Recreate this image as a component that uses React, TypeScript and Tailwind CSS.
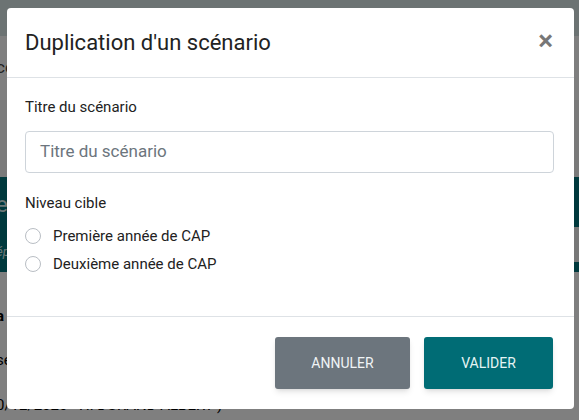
import React from 'react';

const Radio: React.FC<{ label: string }> = ({ label }) => (
  <label className="flex items-center gap-3 h-7 text-[15px] text-[#222]">
    <span className="w-4 h-4 rounded-full border border-[#b9bec4] bg-white" />
    {label}
  </label>
);

const Background: React.FC = () => (
  <div className="flex flex-col w-full h-[420px] text-[15px]">
    <div className="h-[36px] bg-[#d8e6e6]" />
    <div className="h-[64px] bg-white flex items-center text-[#444] text-[17px] -ml-1">ce</div>
    <div className="h-[77px] bg-[#f4f4f4]" />
    <div className="h-[95px] bg-[#00727a] flex">
      <div className="flex-1 text-[#d6eeee] flex flex-col justify-around -ml-1">
        <span className="text-[22px]">e</span>
        <span className="italic text-[13px]">ép</span>
      </div>
      <div className="w-[8px] flex flex-col">
        <div className="h-[50px]" />
        <div className="h-[35px] bg-[#f0f0f0]" />
      </div>
    </div>
    <div className="flex-1 bg-white text-black flex flex-col justify-end gap-[22px] pb-1 -ml-1">
      <span className="font-bold">a</span>
      <span>se</span>
      <span>0/12/2020 - H. DURAND ALBERT )</span>
    </div>
  </div>
);

export default function App() {
  return (
    <div className="relative w-[579px] h-[420px] overflow-hidden" style={{ fontFamily: 'Roboto, "Liberation Sans", sans-serif' }}>
      <Background />
      <div className="absolute inset-0 bg-black/50" />
      <div className="absolute left-[7px] top-[8px] w-[567px] bg-white rounded-[4px] flex flex-col">
        <div className="h-[70px] flex items-center justify-between pl-[18px] pr-[21px] border-b border-[#dee2e6]">
          <h2 className="text-[22px] text-[#222]">Duplication d'un scénario</h2>
          <button className="text-[#777] text-[28px] font-semibold leading-none -mt-1">×</button>
        </div>
        <div className="h-[239px] px-[18px] pt-[18px] flex flex-col border-b border-[#dee2e6]">
          <div className="text-[15px] text-[#222] h-6">Titre du scénario</div>
          <div className="mt-[11px] h-[42px] w-[529px] border border-[#ced4da] rounded-[4px] flex items-center px-[14px] text-[17px] text-[#6c757d]">
            Titre du scénario
          </div>
          <div className="mt-[19px] text-[15px] text-[#222] h-6">Niveau cible</div>
          <div className="mt-[6px] flex flex-col">
            <Radio label="Première année de CAP" />
            <Radio label="Deuxième année de CAP" />
          </div>
        </div>
        <div className="h-[92px] flex items-center justify-end gap-[14px] pr-[21px]">
          <button className="w-[135px] h-[52px] rounded-[3px] bg-[#6c757d] text-[#f0f4f6] text-[14px] shadow-md">ANNULER</button>
          <button className="w-[129px] h-[52px] rounded-[3px] bg-[#006c75] text-[#e6f4f4] text-[14px] shadow-md">VALIDER</button>
        </div>
      </div>
    </div>
  );
}
